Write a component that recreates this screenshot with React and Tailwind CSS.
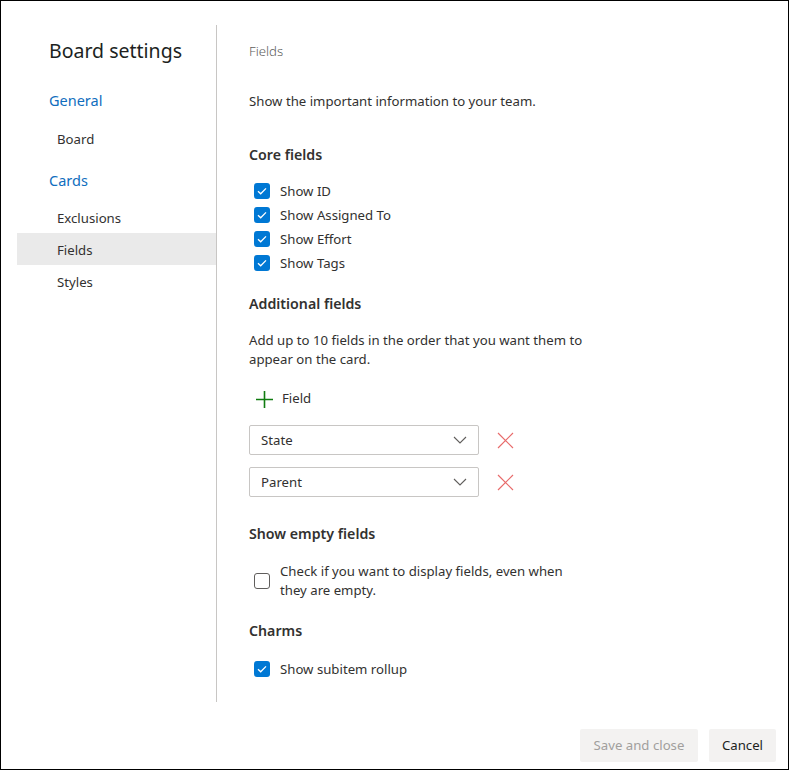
import React from "react";

function Check({ checked }) {
  if (!checked) {
    return <span className="w-[16px] h-[16px] shrink-0 rounded-[3px] border border-[#605e5c] bg-white" />;
  }
  return (
    <span className="w-[16px] h-[16px] shrink-0 rounded-[3px] bg-[#0078d4] flex items-center justify-center">
      <svg width="10" height="8" viewBox="0 0 10 8" fill="none">
        <path d="M1 4.2 L3.7 6.8 L9 1.4" stroke="white" strokeWidth="1.3" />
      </svg>
    </span>
  );
}

function CheckRow({ label }) {
  return (
    <div className="h-[24px] flex items-center pl-[5px] gap-[10px]">
      <Check checked />
      <span className="pt-[2px]">{label}</span>
    </div>
  );
}

function FieldSelect({ value }) {
  return (
    <div className="flex items-center">
      <div className="w-[230px] h-[30px] border border-[#c8c6c4] rounded-[2px] flex items-center justify-between pl-[11px] pr-[11px]">
        <span className="pt-[2px]">{value}</span>
        <svg width="14" height="8" viewBox="0 0 14 8" fill="none">
          <path d="M1 1 L7 7 L13 1" stroke="#605e5c" strokeWidth="1.1" />
        </svg>
      </div>
      <svg className="ml-[18px]" width="17" height="17" viewBox="0 0 17 17" fill="none">
        <path d="M1 1 L16 16 M16 1 L1 16" stroke="#e86b6b" strokeWidth="1.2" />
      </svg>
    </div>
  );
}

export default function App() {
  return (
    <div
      className="w-[789px] h-[770px] border border-black bg-white flex flex-col text-[13.2px] text-[#323130]"
      style={{ fontFamily: '"Noto Sans", "Open Sans", sans-serif' }}
    >
      <div className="flex pt-[24px]">
        {/* Sidebar */}
        <nav className="w-[200px] ml-[16px] h-[677px] border-r border-[#c8c6c4] flex flex-col">
          <div className="h-[50px] flex items-center pt-[2px] pl-[32px] text-[19.5px] text-[#201f1e]">Board settings</div>
          <div className="mt-[10px] h-[30px] flex items-center pt-[2px] pl-[32px] text-[14.5px] text-[#106ebe]">General</div>
          <div className="mt-[7px] h-[32px] flex items-center pt-[3px] pl-[40px]">Board</div>
          <div className="mt-[11px] h-[30px] flex items-center pt-[2px] pl-[32px] text-[14.5px] text-[#106ebe]">Cards</div>
          <div className="mt-[6px] h-[32px] flex items-center pt-[3px] pl-[40px]">Exclusions</div>
          <div className="h-[32px] flex items-center pt-[3px] pl-[40px] bg-[#eaeaea]">Fields</div>
          <div className="h-[32px] flex items-center pt-[3px] pl-[40px]">Styles</div>
        </nav>

        {/* Content */}
        <main className="pl-[32px] flex flex-col">
          <div className="mt-[17px] h-[20px] flex items-center text-[#605e5c] font-light">Fields</div>
          <div className="mt-[30px] h-[20px] flex items-center">Show the important information to your team.</div>

          <div className="mt-[32px] h-[22px] flex items-center text-[14.2px] font-semibold text-[#323130]">Core fields</div>
          <div className="mt-[13px] flex flex-col">
            <CheckRow label="Show ID" />
            <CheckRow label="Show Assigned To" />
            <CheckRow label="Show Effort" />
            <CheckRow label="Show Tags" />
          </div>

          <div className="mt-[18px] h-[22px] flex items-center text-[14.2px] font-semibold text-[#323130]">Additional fields</div>
          <p className="mt-[16px] leading-[19px]">
            Add up to 10 fields in the order that you want them to
            <br />
            appear on the card.
          </p>
          <div className="mt-[14px] h-[32px] flex items-center pl-[7px] gap-[9px]">
            <svg width="17" height="17" viewBox="0 0 17 17" fill="none">
              <path d="M8.5 0 V17 M0 8.5 H17" stroke="#107c10" strokeWidth="1.6" />
            </svg>
            <span>Field</span>
          </div>
          <div className="mt-[10px]">
            <FieldSelect value="State" />
          </div>
          <div className="mt-[12px]">
            <FieldSelect value="Parent" />
          </div>

          <div className="mt-[26px] h-[22px] flex items-center text-[14.2px] font-semibold text-[#323130]">Show empty fields</div>
          <div className="mt-[17px] flex items-center pl-[5px] gap-[10px]">
            <Check checked={false} />
            <p className="leading-[19px]">
              Check if you want to display fields, even when
              <br />
              they are empty.
            </p>
          </div>

          <div className="mt-[20px] h-[22px] flex items-center text-[14.2px] font-semibold text-[#323130]">Charms</div>
          <div className="mt-[15px]">
            <CheckRow label="Show subitem rollup" />
          </div>
        </main>
      </div>

      {/* Footer */}
      <div className="mt-auto mb-[7px] mr-[12px] flex justify-end gap-[11px]">
        <button className="w-[118px] h-[33px] rounded-[2px] bg-[#f3f2f1] text-[#a19f9d]">Save and close</button>
        <button className="w-[67px] h-[33px] rounded-[2px] bg-[#f3f2f1] text-[#201f1e]">Cancel</button>
      </div>
    </div>
  );
}
